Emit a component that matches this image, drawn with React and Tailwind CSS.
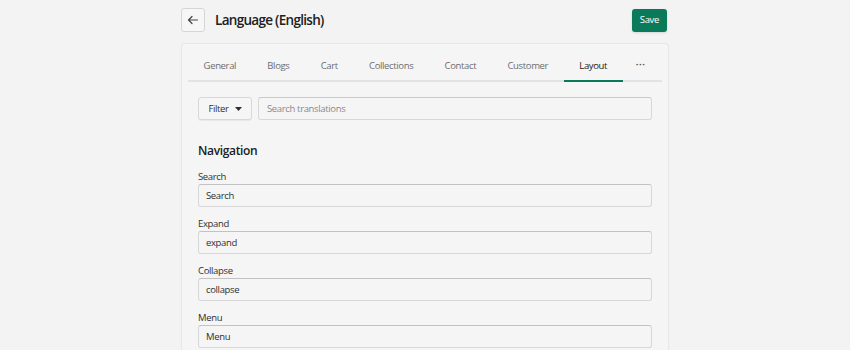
import React from "react";

const tabs = ["General", "Blogs", "Cart", "Collections", "Contact", "Customer", "Layout"];

const fields = [
  { label: "Search", value: "Search" },
  { label: "Expand", value: "expand" },
  { label: "Collapse", value: "collapse" },
  { label: "Menu", value: "Menu" },
];

export default function App() {
  return (
    <div
      className="min-h-[350px] bg-[#f3f3f3] text-[#303030] tracking-[-0.35px]"
      style={{ fontFamily: '"Open Sans", "Noto Sans", sans-serif' }}
    >
      <div className="mx-auto w-[488px] pt-2">
        <div className="flex items-center justify-between">
          <div className="flex items-center gap-[10px]">
            <button className="flex h-[24px] w-[24px] items-center justify-center rounded-[3px] border border-[#d6d6d6] bg-[#f6f6f6]">
              <svg width="12" height="12" viewBox="0 0 12 12" fill="none" stroke="#444" strokeWidth="1.2" strokeLinecap="round" strokeLinejoin="round">
                <path d="M10.5 6H1.8M5 2.5 1.5 6 5 9.5" />
              </svg>
            </button>
            <h1 className="text-[13.5px] font-semibold tracking-[-0.7px] text-[#202020]">Language (English)</h1>
          </div>
          <button className="mr-[2px] h-[23px] rounded-[3px] bg-[#0b7a5b] px-[8px] text-[9.5px] text-white shadow-sm">
            Save
          </button>
        </div>

        <div className="mt-[11px] rounded-t-[4px] border border-b-0 border-[#e8e8e8] bg-[#f5f5f5] shadow-[0_0_2px_rgba(0,0,0,0.04)]">
          <div className="mx-[6px] flex border-b-[2px] border-[#e3e3e3] pt-[6px]">
            {tabs.map((t) => (
              <div
                key={t}
                className={
                  "-mb-[2px] px-[15.6px] pt-[9px] pb-[7px] text-[9.5px] " +
                  (t === "Layout"
                    ? "border-b-[2px] border-[#0b7a5b] text-[#202020]"
                    : "border-b-[2px] border-transparent text-[#6d6d6d]")
                }
              >
                {t}
              </div>
            ))}
            <div className="px-[13px] pt-[8px] text-[9.5px] font-bold tracking-[0.5px] text-[#555]">···</div>
          </div>

          <div className="px-[16px] pt-[15px] pb-4">
            <div className="flex gap-[6px]">
              <button className="flex h-[23px] w-[54px] items-center justify-center gap-[6px] rounded-[3px] border border-[#d8d8d8] bg-[#f6f6f6] text-[9.5px] text-[#303030] shadow-[0_1px_0_rgba(0,0,0,0.05)]">
                Filter
                <svg width="7" height="4" viewBox="0 0 7 4">
                  <path d="M0 0h7L3.5 4z" fill="#303030" />
                </svg>
              </button>
              <div className="flex h-[23px] flex-1 items-center rounded-[3px] border border-[#d8d8d8] border-t-[#cacaca] bg-[#f5f5f5] px-[8px] text-[9.5px] text-[#8a8a8a]">
                Search translations
              </div>
            </div>

            <h2 className="mt-[22px] text-[12px] font-semibold text-[#202020]">Navigation</h2>

            <div className="mt-[9px] flex flex-col gap-[9px]">
              {fields.map((f) => (
                <div key={f.label}>
                  <div className="text-[9.5px] leading-[15px] text-[#303030]">{f.label}</div>
                  <div className="flex h-[23px] items-center rounded-[3px] border border-[#d8d8d8] border-t-[#c2c2c2] bg-[#f5f5f5] px-[7px] text-[9.5px] text-[#303030]">
                    {f.value}
                  </div>
                </div>
              ))}
            </div>
          </div>
        </div>
      </div>
    </div>
  );
}
